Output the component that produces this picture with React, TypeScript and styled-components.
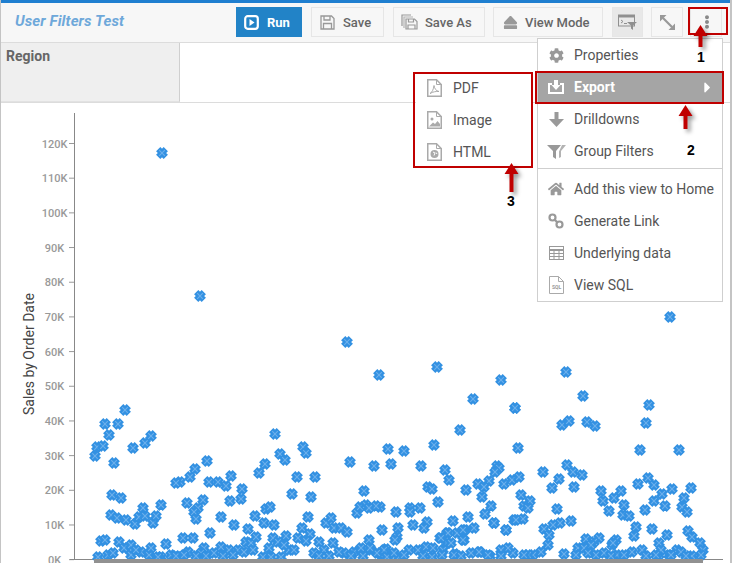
import React from "react";
import styled, { createGlobalStyle } from "styled-components";
import { FaCog, FaHome, FaEject, FaEllipsisV, FaCaretRight } from "react-icons/fa";

const GlobalStyle = createGlobalStyle`
  * { box-sizing: border-box; }
  html, body { margin: 0; padding: 0; background: #fff; }
  body { font-family: Roboto, "Liberation Sans", sans-serif; }
`;

const points: [number, number][] = [
  [161,153],[199,296],[346,342],[378,375],[436,367],[472,399],[669,317],[565,372],[500,380],[582,396],[514,408],[648,405],
  [94,456],[96,447],[102,446],[104,424],[117,424],[108,435],[124,410],[132,448],[144,443],[150,436],[113,463],
  [111,495],[120,498],[110,515],[116,518],[125,520],[134,524],[138,517],[142,508],[144,516],[152,523],[155,516],[160,505],
  [100,541],[104,540],[118,542],[123,548],[130,545],[130,555],[140,552],[148,555],[165,544],[160,557],[170,555],[187,552],
  [182,538],[192,538],[107,555],[97,557],[157,557],[177,557],[203,548],[200,553],[209,533],[220,547],[213,553],[228,550],[237,550],
  [245,542],[250,543],[243,552],[252,550],[272,538],[277,542],[262,557],[270,557],[280,557],[285,536],[288,550],[293,550],
  [179,482],[175,483],[189,477],[194,469],[206,461],[208,482],[217,482],[225,486],[230,476],[241,489],[229,501],[240,499],
  [186,503],[202,500],[197,508],[193,512],[195,519],[220,517],[233,525],[247,529],[255,537],[254,516],[263,523],[273,525],
  [265,509],[269,507],[258,473],[264,464],[274,434],[279,454],[284,460],[302,447],[305,453],[296,477],[314,477],[291,494],[310,497],
  [307,517],[301,528],[309,534],[297,538],[305,541],[349,462],[363,491],[356,513],[359,507],[365,505],[325,523],[330,518],[333,528],[340,528],[346,532],
  [318,542],[332,543],[313,553],[323,550],[343,553],[353,552],[368,540],[360,548],[370,550],[385,549],[380,555],[408,550],[417,550],[425,547],[398,557],
  [387,449],[403,451],[433,445],[459,430],[514,408],[517,448],[639,450],[678,450],[645,423],[561,425],[568,421],[586,422],[594,426],
  [373,466],[390,464],[420,466],[444,470],[448,480],[542,472],[566,465],[572,472],[581,475],[496,466],[498,468],[494,472],[488,481],[477,484],[465,490],
  [483,487],[481,497],[503,484],[511,480],[518,477],[551,488],[558,479],[573,487],[427,487],[431,489],[437,502],[520,495],[529,501],[523,506],[527,508],
  [490,506],[484,514],[493,523],[513,520],[522,519],[505,530],[467,517],[452,521],[473,528],[464,530],[456,533],[446,533],[463,540],[439,538],[446,543],
  [395,512],[409,508],[409,512],[419,508],[379,507],[375,506],[368,508],[426,522],[423,528],[412,525],[381,530],[397,528],[396,537],[394,540],
  [556,509],[570,521],[559,523],[552,525],[543,529],[548,535],[547,545],[540,552],[600,491],[602,501],[608,511],[613,498],[620,491],[623,505],[622,515],[628,516],
  [637,484],[647,478],[653,485],[661,494],[653,501],[644,510],[664,506],[671,489],[690,488],[683,498],[681,507],[686,512],
  [635,527],[633,536],[651,529],[666,535],[658,543],[687,531],[691,537],[699,543],[702,550],[700,555],[641,550],[631,552],
  [615,540],[611,545],[598,538],[593,542],[585,539],[590,545],[577,548],[583,548],[587,553],[603,553],[595,555],[616,555],[623,555],
  [563,554],[532,555],[527,555],[523,555],[512,553],[507,548],[500,550],[489,556],[479,552],[470,553],[454,554],[453,555],[442,550],[441,555],[431,557],
  [383,550],[376,553],[369,548],[386,557],[658,555],[660,550],[655,555],[676,550],[668,555],[680,552],[691,556],[670,555],[612,543],
  [450,543],[462,530],[462,540],[447,533],[440,538],[478,552],[487,555],[493,523],[515,520],[505,530],
  [112,553],[135,550],[150,548],[175,556],[183,555],[195,556],[205,556],[222,556],[232,555],[268,548],[283,545],[318,556],[328,556],
  [338,552],[350,556],[362,556],[393,553],[403,555],[422,556],[432,548],[460,556],[500,556],[645,556],[610,556],[575,555],[685,556],
];

const ticks = [120, 110, 100, 90, 80, 70, 60, 50, 40, 30, 20, 10, 0];

const PlayIcon = () => (
  <svg width="15" height="15" viewBox="0 0 15 15">
    <rect x="1.2" y="1.2" width="12.6" height="12.6" rx="2.5" fill="none" stroke="#fff" strokeWidth="2.2" />
    <path d="M5.5 4l5 3.5-5 3.5z" fill="#fff" />
  </svg>
);

const FloppyIcon = () => (
  <svg width="15" height="15" viewBox="0 0 15 15" fill="none" stroke="#999" strokeWidth="1.3">
    <path d="M1 1h10.500L14 3.500V14H1z" />
    <path d="M4 1v4h6V1M3.500 14V8.500h8V14" />
  </svg>
);

const SaveAsIcon = () => (
  <svg width="17" height="16" viewBox="0 0 17 16" fill="none" stroke="#999" strokeWidth="1.2">
    <path d="M1 12V1h9" />
    <path d="M3 14V3h9" opacity="0.7" />
    <path d="M5 5h8.500L16 7.500V15H5z" fill="#f7f7f7" />
    <path d="M7.500 5v3h5V5M7 15v-4h7v4" />
  </svg>
);

const FilterPanelIcon = () => (
  <svg width="20" height="16" viewBox="0 0 20 16">
    <rect x="0.5" y="1" width="16" height="11" fill="none" stroke="#8f8f8f" />
    <rect x="0.5" y="1" width="16" height="2.5" fill="#8f8f8f" />
    <path d="M3 6l2 1.500L3 9M6 9.500h3" fill="none" stroke="#8f8f8f" />
    <path d="M9 8h10l-4 3.600V16l-2-1.400v-3z" fill="#8f8f8f" />
  </svg>
);

const ExpandIcon = () => (
  <svg width="15" height="15" viewBox="0 0 15 15" fill="#999">
    <path d="M0 0h6.500L0 6.500zM15 15H8.500L15 8.500z" />
    <path d="M3 3l9 9" stroke="#999" strokeWidth="2.2" />
  </svg>
);

const ExportIcon = () => (
  <svg width="16" height="14" viewBox="0 0 16 14" fill="#fff">
    <path d="M0 3h4v2H2v7h12V5h-2V3h4v11H0z" />
    <path d="M6 0h4v5h2.500L8 10 3.500 5H6z" />
  </svg>
);

const DrillIcon = () => (
  <svg width="15" height="15" viewBox="0 0 15 15" fill="#999">
    <path d="M5.500 0h4v7H15l-7.500 8L0 7h5.500z" />
  </svg>
);

const GroupFilterIcon = () => (
  <svg width="19" height="15" viewBox="0 0 19 15" fill="#999">
    <path d="M0 1h14L9 7v8L6 13V7z" />
    <path d="M15 1h4l-5 6v6l-2 1V7.500z" opacity="0.75" />
  </svg>
);

const LinkIcon = () => (
  <svg width="16" height="16" viewBox="0 0 16 16" fill="none" stroke="#999" strokeWidth="2.2">
    <circle cx="4.500" cy="4.500" r="3" />
    <circle cx="11.500" cy="11.500" r="3" />
    <path d="M6.500 6.500l3 3" />
  </svg>
);

const GridIcon = () => (
  <svg width="15" height="14" viewBox="0 0 15 14" fill="none" stroke="#999">
    <rect x="0.5" y="0.5" width="14" height="13" strokeWidth="1" />
    <path d="M0 4h15" strokeWidth="2" />
    <path d="M0 7.500h15M0 10.500h15M5 3v11M10 3v11" />
  </svg>
);

const SqlIcon = () => (
  <svg width="15" height="18" viewBox="0 0 15 18">
    <path d="M0.500 0.500h9l5 5v12h-14z" fill="#fff" stroke="#aaa" />
    <path d="M9.500 0.500v5h5" fill="none" stroke="#aaa" />
    <text x="7.500" y="13" textAnchor="middle" fontSize="5" fontWeight="700" fontFamily="Roboto, sans-serif" fill="#999">
      SQL
    </text>
  </svg>
);

const DocShell = ({ children }: { children?: React.ReactNode }) => (
  <svg width="15" height="18" viewBox="0 0 15 18">
    <path d="M0.750 0.750h8.750l4.750 4.750v11.750h-13.500z" fill="#fff" stroke="#aaa" strokeWidth="1.500" />
    <path d="M9.500 0.750v4.750h4.750" fill="none" stroke="#aaa" />
    {children}
  </svg>
);

const PdfIcon = () => (
  <DocShell>
    <path d="M3 14.500c2-1 3.500-4 4-8 .5 3 2 5.500 5 6-3-.3-6 .3-9 2z" fill="none" stroke="#aaa" />
  </DocShell>
);

const ImageIcon = () => (
  <DocShell>
    <circle cx="5" cy="8" r="1.500" fill="#aaa" />
    <path d="M2 15.500l4-4 2 1.500 2.500-3 2.500 3v2.500z" fill="#aaa" />
  </DocShell>
);

const HtmlIcon = () => (
  <DocShell>
    <circle cx="7.500" cy="11" r="4" fill="#aaa" />
    <path d="M6 9l2 1-1 2.500M9 9.500l1 1.500" stroke="#fff" fill="none" />
  </DocShell>
);

const toolbarItems = [
  { label: "Save", icon: <FloppyIcon />, width: 73, pad: 8, gap: 8, after: 1 },
  { label: "Save As", icon: <SaveAsIcon />, width: 92, pad: 7, gap: 7, after: 0 },
  { label: "View Mode", icon: <FaEject size={15} color="#999" />, width: 110, pad: 9, gap: 7, after: 1 },
];

const menuTop = [
  { label: "Properties", icon: <FaCog size={15} color="#999" /> },
  { label: "Export", icon: <ExportIcon />, active: true },
  { label: "Drilldowns", icon: <DrillIcon /> },
  { label: "Group Filters", icon: <GroupFilterIcon /> },
];

const menuBottom = [
  { label: "Add this view to Home", icon: <FaHome size={16} color="#999" /> },
  { label: "Generate Link", icon: <LinkIcon /> },
  { label: "Underlying data", icon: <GridIcon /> },
  { label: "View SQL", icon: <SqlIcon /> },
];

const exportItems = [
  { label: "PDF", icon: <PdfIcon /> },
  { label: "Image", icon: <ImageIcon /> },
  { label: "HTML", icon: <HtmlIcon /> },
];

const UpArrow = ({ h }: { h: number }) => (
  <svg width="15" height={h} viewBox={`0 0 15 ${h}`}>
    <path d={`M7.500 0l7 11H9.500v${h - 11}h-4V11H.5z`} fill="#c00000" />
  </svg>
);

function App() {
  return (
    <Page>
      <GlobalStyle />
      <TopLine />
      <Header>
        <Title>User Filters Test</Title>
        <Toolbar>
          <RunButton>
            <PlayIcon />
            Run
          </RunButton>
          {toolbarItems.map((b) => (
            <ToolButton key={b.label} $width={b.width} $pad={b.pad} $gap={b.gap} $after={b.after}>
              {b.icon}
              {b.label}
            </ToolButton>
          ))}
          <IconButton $pressed $width={31}>
            <FilterPanelIcon />
          </IconButton>
          <IconButton $width={32} $after={-1}>
            <ExpandIcon />
          </IconButton>
          <IconButton $width={32} $shift={2}>
            <FaEllipsisV size={14} color="#8a8a8a" />
          </IconButton>
        </Toolbar>
      </Header>
      <FilterRow>
        <FilterCell>Region</FilterCell>
      </FilterRow>
      <ChartArea>
        <svg width="730" height="460" viewBox="0 103 730 460">
          <defs>
            <g id="mark">
              <path d="M-3.800 -3.800L3.800 3.800M-3.800 3.800L3.800 -3.800" stroke="#3391e2" strokeWidth="6" />
              <path d="M-2.800 -2.800L2.800 2.800M-2.800 2.800L2.800 -2.800" stroke="#6db0ec" strokeWidth="1.100" />
            </g>
          </defs>
          <text
            transform="translate(33 354) rotate(-90)"
            textAnchor="middle"
            fontFamily="Roboto, sans-serif"
            fontSize="14"
            fill="#444"
          >
            Sales by Order Date
          </text>
          <line x1="73.500" y1="113" x2="73.500" y2="559" stroke="#888" />
          {ticks.map((t, i) => {
            const y = 143.5 + i * 34.68;
            return (
              <g key={t}>
                <line x1="68" y1={y} x2="73" y2={y} stroke="#999" />
                <text
                  x="53.500"
                  y={y + 4}
                  textAnchor="middle"
                  fontFamily="Roboto, sans-serif"
                  fontSize="11"
                  fontWeight="500"
                  fill="#999"
                >
                  {t}K
                </text>
              </g>
            );
          })}
          <line x1="69" y1="559.500" x2="722" y2="559.500" stroke="#888" />
          {points.map(([x, y], i) => (
            <use key={i} href="#mark" x={x} y={y} />
          ))}
          <rect x="93" y="559" width="609" height="4" fill="#919191" />
        </svg>
      </ChartArea>

      <Menu>
        {menuTop.map((m) => (
          <MenuRow key={m.label} $active={m.active}>
            <MenuIcon>{m.icon}</MenuIcon>
            {m.label}
            {m.active && (
              <Caret>
                <FaCaretRight size={17} color="#fff" />
              </Caret>
            )}
          </MenuRow>
        ))}
        <MenuDivider />
        {menuBottom.map((m) => (
          <MenuRow key={m.label}>
            <MenuIcon>{m.icon}</MenuIcon>
            {m.label}
          </MenuRow>
        ))}
      </Menu>

      <SubMenu>
        {exportItems.map((m) => (
          <SubRow key={m.label}>
            <SubIcon>{m.icon}</SubIcon>
            {m.label}
          </SubRow>
        ))}
      </SubMenu>

      <Callout $left={688} $top={7} $w={40} $h={28} />
      <Callout $left={535} $top={71} $w={189} $h={33} />
      <Callout $left={413} $top={72} $w={120} $h={96} />

      <Pointer $left={693} $top={25}>
        <UpArrow h={22} />
      </Pointer>
      <Pointer $left={678} $top={105}>
        <UpArrow h={24} />
      </Pointer>
      <Pointer $left={504} $top={163}>
        <UpArrow h={29} />
      </Pointer>

      <Step $left={697} $top={49}>1</Step>
      <Step $left={687} $top={142}>2</Step>
      <Step $left={507} $top={193}>3</Step>
    </Page>
  );
}

const Page = styled.div`
  position: relative;
  width: 732px;
  height: 563px;
  overflow: hidden;
  background: #fff;
  border-left: 1px solid #c4c4c4;
  border-right: 2px solid #c4c4c4;
`;

const TopLine = styled.div`
  height: 3px;
  margin-left: -1px;
  margin-right: -2px;
  background: #1f7fd0;
`;

const Header = styled.header`
  height: 40px;
  display: flex;
  align-items: center;
  justify-content: space-between;
  padding: 0 8px 0 14px;
  background: #f7f7f7;
  border-bottom: 1px solid #dcdcdc;
`;

const Title = styled.div`
  font-size: 15px;
  font-weight: 700;
  font-style: italic;
  letter-spacing: 0.12px;
  color: #6ea8da;
  margin-top: -4px;
`;

const Toolbar = styled.div`
  display: flex;
  align-items: center;
  gap: 8px;
  margin-top: -1px;
`;

const RunButton = styled.div`
  width: 66px;
  height: 30px;
  margin-right: 1px;
  padding-left: 8px;
  display: flex;
  align-items: center;
  gap: 8px;
  background: #2283c7;
  color: #fff;
  font-size: 13px;
  font-weight: 700;
`;

const ToolButton = styled.div<{ $width: number; $pad: number; $gap: number; $after: number }>`
  width: ${(p) => p.$width}px;
  height: 30px;
  margin-right: ${(p) => p.$after}px;
  padding-left: ${(p) => p.$pad}px;
  display: flex;
  align-items: center;
  gap: ${(p) => p.$gap}px;
  border: 1px solid #e6e6e6;
  color: #666;
  font-size: 13px;
  font-weight: 500;
  white-space: nowrap;
`;

const IconButton = styled.div<{ $width: number; $pressed?: boolean; $after?: number; $shift?: number }>`
  width: ${(p) => p.$width}px;
  height: 30px;
  margin-right: ${(p) => p.$after ?? 0}px;
  padding-left: ${(p) => p.$shift ?? 0}px;
  display: flex;
  align-items: center;
  justify-content: center;
  border: 1px solid #e6e6e6;
  background: ${(p) => (p.$pressed ? "#e8e8e8" : "transparent")};
`;

const FilterRow = styled.div`
  height: 60px;
  border-bottom: 1px solid #dcdcdc;
`;

const FilterCell = styled.div`
  width: 179px;
  height: 59px;
  padding: 5px 5px;
  background: #efefef;
  border-right: 1px solid #cfcfcf;
  border-bottom: 1px solid #e2e2e2;
  font-size: 14px;
  font-weight: 700;
  color: #666;
`;

const ChartArea = styled.div`
  height: 460px;
  svg {
    display: block;
  }
`;

const Menu = styled.div`
  position: absolute;
  left: 536px;
  top: 38px;
  width: 186px;
  height: 264px;
  background: #fff;
  border: 1px solid #cfcfcf;
`;

const MenuRow = styled.div<{ $active?: boolean }>`
  position: relative;
  height: 32px;
  display: flex;
  align-items: center;
  color: ${(p) => (p.$active ? "#fff" : "#555")};
  background: ${(p) => (p.$active ? "#a5a5a5" : "transparent")};
  font-size: 14px;
  font-weight: ${(p) => (p.$active ? 700 : 400)};
  white-space: nowrap;
`;

const MenuIcon = styled.span`
  width: 36px;
  display: flex;
  justify-content: center;
`;

const Caret = styled.span`
  position: absolute;
  right: 6px;
  top: 8px;
  display: flex;
`;

const MenuDivider = styled.div`
  height: 1px;
  margin: 1px 0 4px;
  background: #cfcfcf;
`;

const SubMenu = styled.div`
  position: absolute;
  left: 415px;
  top: 72px;
  width: 116px;
  height: 96px;
  display: flex;
  flex-direction: column;
  background: #fff;
`;

const SubRow = styled.div`
  height: 32px;
  display: flex;
  align-items: center;
  font-size: 14px;
  color: #555;
`;

const SubIcon = styled.span`
  width: 37px;
  display: flex;
  justify-content: center;
`;

const Callout = styled.div<{ $left: number; $top: number; $w: number; $h: number }>`
  position: absolute;
  left: ${(p) => p.$left - 1}px;
  top: ${(p) => p.$top}px;
  width: ${(p) => p.$w}px;
  height: ${(p) => p.$h}px;
  border: 2px solid #c00000;
`;

const Pointer = styled.div<{ $left: number; $top: number }>`
  position: absolute;
  left: ${(p) => p.$left - 1}px;
  top: ${(p) => p.$top}px;
  display: flex;
  filter: drop-shadow(3px 3px 2px rgba(0, 0, 0, 0.4));
`;

const Step = styled.div<{ $left: number; $top: number }>`
  position: absolute;
  left: ${(p) => p.$left - 1}px;
  top: ${(p) => p.$top}px;
  font-family: "Liberation Sans", sans-serif;
  font-size: 14px;
  font-weight: 700;
  line-height: 16px;
  color: #000;
`;

export default App;
